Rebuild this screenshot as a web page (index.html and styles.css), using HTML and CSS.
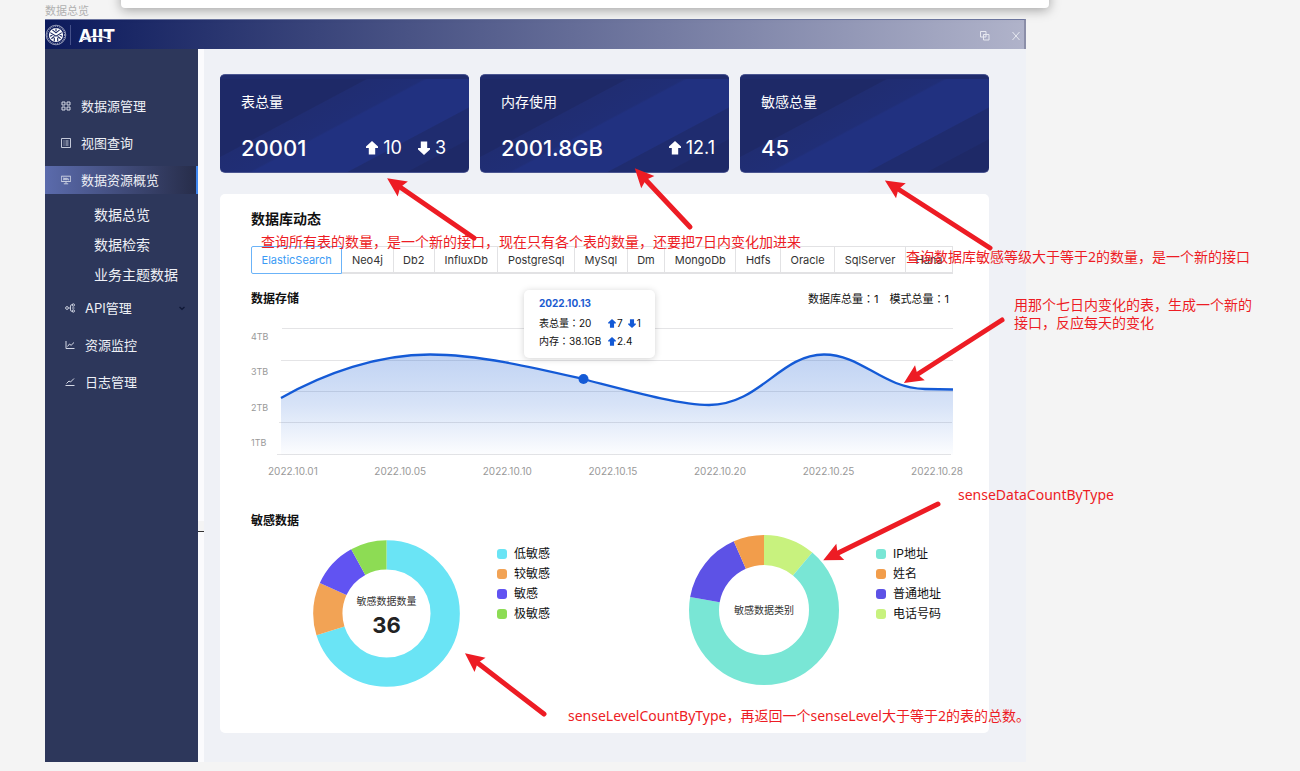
FILE: index.html
```html
<!DOCTYPE html>
<html lang="zh-CN">
<head>
<meta charset="utf-8">
<meta name="viewport" content="width=device-width, initial-scale=1">
<title>数据总览</title>
<link rel="stylesheet" href="styles.css">
</head>
<body>
<svg class="symbols" aria-hidden="true">
  <symbol id="arrow-up" viewBox="0 0 12 14"><path d="M6 0L12 5.600V7H9.200V13.500H2.800V7H0V5.600z"/></symbol>
  <symbol id="arrow-down" viewBox="0 0 12 14"><path d="M6 14L12 8.400V7H9.200V.5H2.800V7H0V8.400z"/></symbol>
</svg>
<div class="board">
  <div class="sheet"></div>
  <p class="frame-name">数据总览</p>

  <div class="frame">
    <header class="topbar">
      <svg class="seal" viewBox="0 0 22 22" fill="none" stroke="#fff">
        <circle cx="11" cy="11" r="9.8" stroke-width=".8" opacity=".65"/>
        <circle cx="11" cy="11" r="8.7" stroke-width="1.2" stroke-dasharray="1 .9" opacity=".55"/>
        <circle cx="11" cy="11" r="7.1" fill="#fff" stroke="none"/>
        <path stroke="#16245f" stroke-width="1.1" d="M11 4.5v2.7M7.4 5.8l3.6 3 3.6-3M5.3 8.6l5.7 3.6 5.7-3.6M5 12.2l2.4-.9M17 12.2l-2.4-.9M6.4 14.8l3-2.4M15.600 14.800l-3-2.400M9.300 17.300v-3.500M12.700 17.300v-3.500"/>
      </svg>
      <span class="topbar-line"></span>
      <svg class="brand" viewBox="0 0 36 18" role="img" aria-label="AIIT">
        <text x="0" y="16" class="brand-text">AIIT</text>
        <path d="M3 13.500Q14 8.500 31 14" fill="none" stroke="#1a2764" stroke-width="1"/>
        <path d="M0 16Q14 7 30 12.500" fill="none" stroke="#fff" stroke-width="1.300"/>
      </svg>
      <div class="window-buttons">
        <button type="button" aria-label="还原"><svg viewBox="0 0 10 10" fill="none" stroke="currentColor"><path d="M.5.5h5.500v5.500H.5zM3.500 3.500h5.500v5.500H3.500z"/></svg></button>
        <button type="button" aria-label="关闭"><svg viewBox="0 0 10 10" fill="none" stroke="currentColor"><path d="M1.500 1l7 8M8.500 1l-7 8"/></svg></button>
      </div>
    </header>

    <div class="body">
      <nav class="sidebar">
        <ul class="menu">
          <li><a class="menu-item" href="#source"><svg viewBox="0 0 10 10" fill="none" stroke="currentColor"><path d="M1 1h3v3H1zM6 1h3v3H6zM1 6h3v3H1zM6 6h3v3H6z"/></svg>数据源管理</a></li>
          <li><a class="menu-item" href="#view"><svg viewBox="0 0 10 10" fill="none" stroke="currentColor"><path d="M.5.5h9v9h-9zM2.500 3h1M4.500 3h3M2.500 5h1M4.500 5h3M2.500 7h1M4.500 7h3" stroke-width=".9"/></svg>视图查询</a></li>
          <li><a class="menu-item active" href="#overview"><svg viewBox="0 0 10 10" fill="none" stroke="currentColor" stroke-width=".9"><path d="M.3 1.200h9.400v5.300H.3zM5 6.500v2M2.800 8.800h4.400M2 3.200h1.500v1.500H2M4.500 3.200h1.200v1.500H4.500zM6.800 3v1.800h1.300"/></svg>数据资源概览</a>
            <ul class="submenu">
              <li><a href="#all">数据总览</a></li>
              <li><a href="#search">数据检索</a></li>
              <li><a href="#topic">业务主题数据</a></li>
            </ul>
          </li>
        </ul>
        <ul class="menu menu-minor">
          <li><a class="menu-item" href="#api"><svg viewBox="0 0 10 10" fill="none" stroke="currentColor" stroke-width=".9"><circle cx="2" cy="5" r="1.400"/><path d="M3.500 5h2M8 1.800H6.500q-1 0-1 1v4.400q0 1 1 1H8"/><circle cx="8.300" cy="2" r="1.200"/><circle cx="8.300" cy="8" r="1.200"/><path d="M7 5h2.500"/></svg>API管理<svg class="chevron" viewBox="0 0 8 8" fill="none" stroke="#111a38" stroke-width="1.400"><path d="M1.500 3L4 5.300 6.500 3"/></svg></a></li>
          <li><a class="menu-item" href="#monitor"><svg viewBox="0 0 10 10" fill="none" stroke="currentColor"><path d="M1 1v7.500h8.500M2.500 6.500l2-2.500 1.600 1.300L9 2.500"/></svg>资源监控</a></li>
          <li><a class="menu-item" href="#log"><svg viewBox="0 0 10 10" fill="none" stroke="currentColor"><path d="M.5 8.500h9M1.500 6.500l2.500-2.500 1.500 1L9 1.500"/></svg>日志管理</a></li>
        </ul>
      </nav>
      <div class="gutter"><span class="gutter-handle"></span></div>

      <main class="main">
        <section class="cards">
          <article class="card">
            <h2>表总量</h2>
            <div class="card-row"><strong>20001</strong>
              <span class="trend"><span><svg><use href="#arrow-up"/></svg>10</span><span><svg><use href="#arrow-down"/></svg>3</span></span></div>
          </article>
          <article class="card">
            <h2>内存使用</h2>
            <div class="card-row"><strong>2001.8GB</strong>
              <span class="trend trend-tight"><span><svg><use href="#arrow-up"/></svg>12.1</span></span></div>
          </article>
          <article class="card">
            <h2>敏感总量</h2>
            <div class="card-row"><strong>45</strong></div>
          </article>
        </section>

        <section class="panel">
          <h2 class="panel-title">数据库动态</h2>
          <div class="tabs">
            <button type="button" class="tab selected">ElasticSearch</button><button type="button" class="tab">Neo4j</button><button type="button" class="tab">Db2</button><button type="button" class="tab">InfluxDb</button><button type="button" class="tab">PostgreSql</button><button type="button" class="tab">MySql</button><button type="button" class="tab">Dm</button><button type="button" class="tab">MongoDb</button><button type="button" class="tab">Hdfs</button><button type="button" class="tab">Oracle</button><button type="button" class="tab">SqlServer</button><button type="button" class="tab">Hana</button>
          </div>

          <div class="storage-head">
            <h3>数据存储</h3>
            <p><span>数据库总量<i class="colon" lang="zh-TW">：</i>1</span><span>模式总量<i class="colon" lang="zh-TW">：</i>1</span></p>
          </div>
          <div class="chart">
            <div class="y-axis"><span>4TB</span><span>3TB</span><span>2TB</span><span>1TB</span></div>
            <div class="plot">
              <svg viewBox="277 328 676 127" preserveAspectRatio="none">
                <defs><linearGradient id="area" x1="0" y1="0" x2="0" y2="1"><stop offset="0" stop-color="#145ad2" stop-opacity=".27"/><stop offset=".5" stop-color="#145ad2" stop-opacity=".17"/><stop offset="1" stop-color="#145ad2" stop-opacity=".01"/></linearGradient></defs>
                <path stroke="#e4e4e6" d="M282 328.500H953M281 360.500H953M280 391.500H953M279 422.500H952M277 454.500H951"/>
                <path fill="url(#area)" d="M281 398C325 373 378 354.500 430 354.500C480 354.500 540 369 583 379C630 391 680 405 709 405C760 405 780 354.500 824 354.500C862 354.500 882 388 925 389L953 389.500V455H281z"/>
                <path fill="none" stroke="#145ad6" stroke-width="2.300" d="M281 398C325 373 378 354.500 430 354.500C480 354.500 540 369 583 379C630 391 680 405 709 405C760 405 780 354.500 824 354.500C862 354.500 882 388 925 389L953 389.500"/>
                <circle cx="583.500" cy="379" r="5" fill="#145ad6"/>
              </svg>
              <div class="tooltip">
                <strong>2022.10.13</strong>
                <dl>
                  <div><dt>表总量<i class="colon" lang="zh-TW">：</i>20</dt><dd><svg><use href="#arrow-up"/></svg>7</dd><dd><svg><use href="#arrow-down"/></svg>1</dd></div>
                  <div><dt>内存<i class="colon" lang="zh-TW">：</i>38.1GB</dt><dd><svg><use href="#arrow-up"/></svg>2.4</dd></div>
                </dl>
              </div>
            </div>
          </div>
          <div class="x-axis"><span>2022.10.01</span><span>2022.10.05</span><span>2022.10.10</span><span>2022.10.15</span><span>2022.10.20</span><span>2022.10.25</span><span>2022.10.28</span></div>

          <h3 class="sense-title">敏感数据</h3>
          <div class="donuts">
            <div class="donut-group">
              <div class="donut donut-level">
                <svg viewBox="0 0 147 147" fill="none" stroke-width="29.300">
                  <g transform="rotate(-90 73.500 73.500)">
                    <circle cx="73.500" cy="73.500" r="58.700" pathLength="360" stroke="#6ae4f5" stroke-dasharray="252.600 360"/>
                    <circle cx="73.500" cy="73.500" r="58.700" pathLength="360" stroke="#f2a355" stroke-dasharray="42.100 360" stroke-dashoffset="-252.600"/>
                    <circle cx="73.500" cy="73.500" r="58.700" pathLength="360" stroke="#6153f2" stroke-dasharray="36.500 360" stroke-dashoffset="-294.700"/>
                    <circle cx="73.500" cy="73.500" r="58.700" pathLength="360" stroke="#8ddc54" stroke-dasharray="28.800 360" stroke-dashoffset="-331.200"/>
                  </g>
                </svg>
                <p class="donut-label">敏感数据数量<strong>36</strong></p>
              </div>
              <ul class="legend">
                <li><i class="swatch cyan"></i>低敏感</li>
                <li><i class="swatch orange"></i>较敏感</li>
                <li><i class="swatch violet"></i>敏感</li>
                <li><i class="swatch green"></i>极敏感</li>
              </ul>
            </div>
            <div class="donut-group">
              <div class="donut donut-type">
                <svg viewBox="0 0 150 150" fill="none" stroke-width="30">
                  <g transform="rotate(-90 75 75)">
                    <circle cx="75" cy="75" r="60" pathLength="360" stroke="#c8f27e" stroke-dasharray="40.100 360"/>
                    <circle cx="75" cy="75" r="60" pathLength="360" stroke="#79e6d5" stroke-dasharray="239.900 360" stroke-dashoffset="-40.100"/>
                    <circle cx="75" cy="75" r="60" pathLength="360" stroke="#5d52e6" stroke-dasharray="56.200 360" stroke-dashoffset="-280"/>
                    <circle cx="75" cy="75" r="60" pathLength="360" stroke="#f29d4b" stroke-dasharray="23.800 360" stroke-dashoffset="-336.200"/>
                  </g>
                </svg>
                <p class="donut-label">敏感数据类别</p>
              </div>
              <ul class="legend">
                <li><i class="swatch teal"></i>IP地址</li>
                <li><i class="swatch amber"></i>姓名</li>
                <li><i class="swatch indigo"></i>普通地址</li>
                <li><i class="swatch lime"></i>电话号码</li>
              </ul>
            </div>
          </div>
        </section>
      </main>
    </div>
  </div>

  <svg class="arrows" aria-hidden="true">
    <defs><marker id="head" viewBox="-20 -10 20 20" refX="-12" refY="0" markerWidth="20" markerHeight="20" markerUnits="userSpaceOnUse" orient="auto"><path d="M0 0L-19-9-16 0-19 9z" fill="#ed1c24"/></marker></defs>
    <g stroke="#ed1c24" stroke-width="5" stroke-linecap="round" marker-end="url(#head)">
      <path d="M474 238L397 185"/>
      <path d="M690 227L643 177"/>
      <path d="M990 248L895 187"/>
      <path d="M1002 320L914 376.500"/>
      <path d="M938 504L834 555"/>
      <path d="M544 714L474.500 660.500"/>
    </g>
  </svg>
  <p class="note note-tables">查询所有表的数量，是一个新的接口，现在只有各个表的数量，还要把7日内变化加进来</p>
  <p class="note note-sense">查询数据库敏感等级大于等于2的数量，是一个新的接口</p>
  <p class="note note-daily">用那个七日内变化的表，生成一个新的<br>接口，反应每天的变化</p>
  <p class="note note-type">senseDataCountByType</p>
  <p class="note note-level">senseLevelCountByType，再返回一个senseLevel大于等于2的表的总数。</p>
</div>
</body>
</html>
```
FILE: styles.css
```css
* { box-sizing: border-box; }
body, h2, h3, p, ul, dl, dd { margin: 0; padding: 0; }
ul { list-style: none; }
a { color: inherit; text-decoration: none; }
i { font-style: normal; }
svg { display: block; }
button { font: inherit; color: inherit; background: none; border: 0; padding: 0; }
body { background: #f4f4f4; font-family: Inter, "Noto Sans CJK SC", sans-serif; font-size: 12px; color: #111; }
.symbols { position: absolute; width: 0; height: 0; }
.colon { font-family: "Noto Sans CJK TC", sans-serif; line-height: 1; }

.board { position: relative; min-height: 100vh; padding: 3px 274px 9px 45px; overflow: hidden; }
.sheet { position: absolute; top: -12px; left: 121px; right: 251px; height: 20px; background: #fff; border-radius: 4px; box-shadow: 0 2px 12px rgba(0, 0, 0, .35); }
.frame-name { height: 16px; line-height: 16px; font-size: 11px; color: #b0b0b0; }

.topbar { display: flex; align-items: center; height: 30px; background: linear-gradient(90deg, #0c1a5c, #b0b3ca); border-top: 1px solid #6d76a0; border-right: 2px solid #8b8ea8; }
.seal { width: 22px; height: 22px; }
.topbar-line { width: 1px; height: 20px; margin: 0 8px 0 3px; background: #46518a; }
.brand { width: 36px; height: 18px; overflow: visible; }
.brand-text { font: bold 18px "DejaVu Sans Condensed", "DejaVu Sans", sans-serif; fill: #fff; }
.window-buttons { display: flex; gap: 21px; margin-left: auto; padding: 3px 3px 0 0; color: #e6e8f0; }
.window-buttons svg { width: 10px; height: 10px; }

.body { display: flex; }
.sidebar { flex: 0 0 153px; padding-top: 43px; background: #2d375b; color: #eef0f6; }
.menu > li + li { margin-top: 9px; }
.menu-item { display: flex; align-items: center; height: 28px; padding: 0 12px 1px 16px; gap: 10px; font-size: 13px; }
.menu-item svg { width: 10px; height: 10px; color: #d5d9e6; }
.menu-item.active { background: linear-gradient(90deg, #5b6bac, #272d4a); border-right: 2px solid #3f86f0; }
.submenu { margin-top: 6px; padding-left: 49px; font-size: 14px; line-height: 30px; }
.menu-minor { margin-top: 4px; }
.menu-minor .menu-item { padding-left: 20px; gap: 10px; }
.menu-item .chevron { width: 8px; height: 8px; margin-left: auto; }
.gutter { flex: 0 0 6px; display: flex; align-items: flex-start; background: #fbfbfd; }
.gutter-handle { width: 100%; height: 11px; margin-top: 472px; background: #f4f4f4; border-bottom: 1px solid #333; }
.main { flex: 1; min-width: 0; padding: 25px 37px 29px 16px; background: #eff1f6; }

.cards { display: grid; grid-template-columns: repeat(3, 1fr); gap: 11px; }
.card { height: 99px; padding: 17px 23px 0 21px; border: 1px solid #4a5590; border-width: 1px 0; border-radius: 5px; color: #fff;
  background: linear-gradient(#1f2b6c, #1f2b6c) 0 0 / 100% 4px no-repeat,
    linear-gradient(152deg, #1e2967 72px, #202d72 73px, #202e76 99px, #213180 101px, #213180 145px, #1f2c6f 146px, #1f2c6f 173px, #1e2967 174px); }
.card h2 { font-size: 14px; font-weight: 400; line-height: 20px; }
.card-row { display: flex; align-items: center; justify-content: space-between; margin-top: 20px; line-height: 32px; }
.card-row strong { font-size: 22px; font-weight: 500; }
.trend { display: flex; gap: 16px; font-size: 18px; }
.trend > span { display: flex; align-items: center; gap: 5px; }
.trend svg { width: 12px; height: 14px; fill: #fff; }
.trend-tight { margin-right: -9px; }

.panel { margin-top: 21px; padding: 15px 36px 46px 31px; background: #fff; border-radius: 5px; }
.panel-title { font-size: 14px; line-height: 20px; }
.panel h3 { font-size: 12px; line-height: 20px; }
.tabs { display: flex; margin-top: 17px; }
.tab { flex: 1 1 auto; height: 28px; border: 1px solid #e2e2e4; border-left: 0; border-bottom-width: 2px; font-size: 11px; color: #333; }
.tab.selected { border: 1px solid #6bb3f8; border-radius: 2px 0 0 2px; color: #3a9bf5; }
.storage-head { display: flex; justify-content: space-between; height: 20px; margin-top: 15px; padding-right: 4px; font-size: 11px; line-height: 20px; }
.storage-head p { display: flex; gap: 11px; }
.chart { display: flex; margin-top: 19px; }
.y-axis { flex: 0 0 26px; display: flex; flex-direction: column; justify-content: space-between; padding: 2px 0 5px; font-size: 9px; line-height: 14px; color: #999; }
.plot { position: relative; flex: 1; min-width: 0; }
.plot > svg { width: 100%; height: 127px; }
.x-axis { display: flex; justify-content: space-between; margin: 9px -10px 0 17px; font-size: 10px; line-height: 14px; color: #999; }
.tooltip { position: absolute; top: -38px; left: 247px; width: 131px; height: 68px; padding: 4px 10px 0 15px; background: #fff; border-radius: 5px; box-shadow: 0 1px 7px rgba(0, 0, 0, .18); font-size: 10px; line-height: 18px; }
.tooltip strong { display: block; color: #1c5cd0; }
.tooltip dl { margin-top: 2px; }
.tooltip dl div { display: flex; gap: 5px; height: 18px; }
.tooltip dt { flex: 0 0 64px; white-space: nowrap; }
.tooltip dd { display: flex; align-items: center; gap: 1px; }
.tooltip svg { width: 8px; height: 9px; fill: #145ad6; }

.sense-title { margin-top: 33px; }
.donuts { display: grid; grid-template-columns: 376fr 326fr; margin-top: 4px; }
.donut-group { display: flex; align-items: flex-start; gap: 37px; padding-left: 62px; }
.donut { position: relative; }
.donut-level { width: 147px; margin-top: 5px; }
.donut-type { width: 150px; }
.donut-label { position: absolute; inset: 0; display: flex; flex-direction: column; align-items: center; justify-content: center; font-size: 10px; line-height: 14px; white-space: nowrap; color: #333; }
.donut-level .donut-label { padding-top: 8px; }
.donut-label strong { font-size: 22px; line-height: 34px; color: #222; }
.legend { padding-top: 9px; font-size: 12px; line-height: 20px; white-space: nowrap; }
.legend li { display: flex; align-items: center; gap: 7px; }
.swatch { width: 10px; height: 10px; border-radius: 3px; }
.cyan { background: #6ae4f5; }
.orange { background: #f2a355; }
.violet { background: #6153f2; }
.green { background: #8ddc54; }
.teal { background: #79e6d5; }
.amber { background: #f29d4b; }
.indigo { background: #5d52e6; }
.lime { background: #c8f27e; }

.arrows { position: absolute; top: 0; left: 0; width: 100%; height: 100%; pointer-events: none; }
.note { position: absolute; font-family: "Noto Sans", "Noto Sans CJK SC", sans-serif; font-size: 14px; line-height: 18px; white-space: nowrap; color: #ed1c24; }
.note-tables { top: 233px; left: 261px; }
.note-sense { top: 248px; left: 906px; }
.note-daily { top: 296px; left: 1014px; }
.note-type { top: 486px; left: 958px; }
.note-level { top: 707px; left: 568px; }
```
